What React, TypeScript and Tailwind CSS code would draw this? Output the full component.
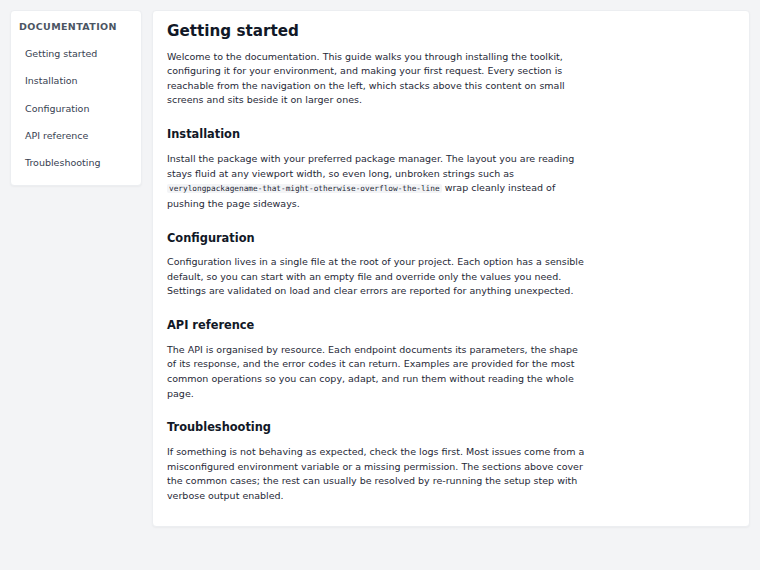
import React from 'react';

const sections = [
  { id: 'installation', title: 'Installation' },
  { id: 'configuration', title: 'Configuration' },
  { id: 'api', title: 'API reference' },
  { id: 'troubleshooting', title: 'Troubleshooting' },
];

const navItems = ['Getting started', ...sections.map((s) => s.title)];

const Sidebar = () => (
  <aside className="w-[132px] shrink-0 self-start rounded-[4px] border border-[#eceef1] bg-white pt-[9px] pb-[8px] shadow-[0_1px_2px_rgba(0,0,0,0.04)]">
    <div className="px-[8px] text-[9.5px] font-bold uppercase leading-[14px] tracking-[0.04em] text-[#4b5563]">
      Documentation
    </div>
    <nav className="mt-[6.3px] flex flex-col">
      {navItems.map((item) => (
        <a
          key={item}
          href="#"
          className="flex h-[27.3px] items-center px-[14px] text-[9.5px] leading-[14px] text-[#374151] hover:text-[#111827]"
        >
          {item}
        </a>
      ))}
    </nav>
  </aside>
);

const Heading = ({ children }: { children: React.ReactNode }) => (
  <h2 className="mt-[18.2px] mb-[9.7px] text-[11.4px] font-bold leading-[16px] text-[#111827]">{children}</h2>
);

const Para = ({ children }: { children: React.ReactNode }) => (
  <p className="max-w-[420px] text-[9.5px] leading-[14.6px] text-[#1f2937]">{children}</p>
);

export default function App() {
  return (
    <div
      className="min-h-[570px] bg-[#f3f4f6] p-[10px]"
      style={{ fontFamily: '"DejaVu Sans", sans-serif' }}
    >
      <div className="flex items-start gap-[10px]">
        <Sidebar />
        <main className="min-w-0 flex-1 rounded-[4px] border border-[#eceef1] bg-white px-[14px] pt-[10px] pb-[23px] shadow-[0_1px_2px_rgba(0,0,0,0.04)]">
          <h1 className="mb-[8.7px] text-[15.2px] font-bold leading-[20px] text-[#111827]">Getting started</h1>
          <Para>
            Welcome to the documentation. This guide walks you through installing the toolkit, configuring it for
            your environment, and making your first request. Every section is reachable from the navigation on the
            left, which stacks above this content on small screens and sits beside it on larger ones.
          </Para>

          <Heading>Installation</Heading>
          <Para>
            Install the package with your preferred package manager. The layout you are reading stays fluid at any
            viewport width, so even long, unbroken strings such as{' '}
            <code
              className="break-words rounded-[2px] bg-[#f3f4f6] px-[2px] text-[7.75px]"
              style={{ fontFamily: '"DejaVu Sans Mono", monospace' }}
            >
              verylongpackagename-that-might-otherwise-overflow-the-line
            </code>{' '}
            wrap cleanly instead of pushing the page sideways.
          </Para>

          <Heading>Configuration</Heading>
          <Para>
            Configuration lives in a single file at the root of your project. Each option has a sensible default, so
            you can start with an empty file and override only the values you need. Settings are validated on load
            and clear errors are reported for anything unexpected.
          </Para>

          <Heading>API reference</Heading>
          <Para>
            The API is organised by resource. Each endpoint documents its parameters, the shape of its response, and
            the error codes it can return. Examples are provided for the most common operations so you can copy,
            adapt, and run them without reading the whole page.
          </Para>

          <Heading>Troubleshooting</Heading>
          <Para>
            If something is not behaving as expected, check the logs first. Most issues come from a misconfigured
            environment variable or a missing permission. The sections above cover the common cases; the rest can
            usually be resolved by re-running the setup step with verbose output enabled.
          </Para>
        </main>
      </div>
    </div>
  );
}
